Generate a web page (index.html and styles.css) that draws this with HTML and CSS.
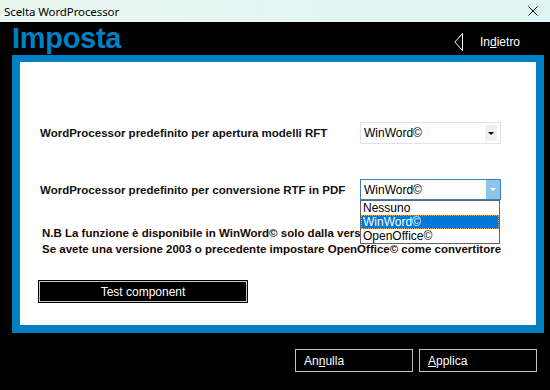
FILE: index.html
```html
<!DOCTYPE html>
<html>
<head>
<meta charset="utf-8">
<link rel="stylesheet" href="styles.css">
</head>
<body>
<div class="window">
  <div class="titlebar">
    <span class="title">Scelta WordProcessor</span>
    <svg class="close" width="10" height="10" viewBox="0 0 10 10"><path d="M0.5 0.5 L9.5 9.5 M9.5 0.5 L0.5 9.5" stroke="#000" stroke-width="1"/></svg>
  </div>
  <div class="client">
    <div class="header">
      <h1 class="heading">Imposta</h1>
      <div class="back">
        <svg class="back-icon" width="9" height="18" viewBox="0 0 9 18"><polygon points="8.5,0.5 8.5,17.5 0.8,9" fill="none" stroke="#fff" stroke-width="1"/></svg>
        <span class="back-text">In<u>d</u>ietro</span>
      </div>
    </div>
    <div class="panel">
      <div class="inner">
        <div class="row row1">
          <span class="label">WordProcessor predefinito per apertura modelli RFT</span>
          <div class="combo">
            <span class="combo-text">WinWord©</span>
            <span class="combo-btn"><span class="arrow"></span></span>
          </div>
        </div>
        <div class="row row2">
          <span class="label">WordProcessor predefinito per conversione RTF in PDF</span>
          <div class="combo combo-open">
            <span class="combo-text">WinWord©</span>
            <span class="combo-btn"><span class="arrow arrow-white"></span></span>
            <ul class="list">
              <li>Nessuno</li>
              <li class="sel">WinWord©</li>
              <li>OpenOffice©</li>
            </ul>
          </div>
        </div>
        <div class="note">
          <p class="note1">N.B La funzione è disponibile in WinWord© solo dalla versione 2007</p>
          <p class="note2">Se avete una versione 2003 o precedente impostare OpenOffice© come convertitore</p>
        </div>
        <div class="test-btn"><span>Test component</span></div>
      </div>
    </div>
    <div class="footer">
      <div class="btn"><span>An<u>n</u>ulla</span></div>
      <div class="btn"><span><u>A</u>pplica</span></div>
    </div>
  </div>
</div>
</body>
</html>
```
FILE: styles.css
```css
html, body {
  margin: 0;
  padding: 0;
}
body {
  width: 550px;
  height: 390px;
  overflow: hidden;
  font-family: "Liberation Sans", Arial, sans-serif;
}
.window {
  width: 550px;
  height: 390px;
  display: flex;
  flex-direction: column;
  background: #000;
}
.titlebar {
  height: 22px;
  flex: none;
  background: linear-gradient(90deg, #e9f6ef, #e0f5f5);
  display: flex;
  align-items: center;
  padding-left: 4px;
  padding-right: 12px;
}
.title {
  font-family: "Noto Sans", "Liberation Sans", sans-serif;
  font-size: 11.5px;
  color: #000;
  flex: 1;
  letter-spacing: -0.1px;
}
.close {
  display: block;
}
.client {
  flex: 1;
  display: flex;
  flex-direction: column;
}
.header {
  height: 33px;
  display: flex;
  align-items: flex-start;
  padding-left: 12px;
}
.heading {
  margin: 0;
  font-family: "Liberation Sans", Arial, sans-serif;
  font-weight: bold;
  font-size: 29px;
  line-height: 33px;
  color: #0080c2;
  flex: 1;
  letter-spacing: -0.3px;
}
.back {
  display: flex;
  align-items: center;
  margin-top: 11px;
  width: 96px;
}
.back-icon {
  display: block;
  margin-left: 0;
}
.back-text {
  color: #fff;
  font-size: 12px;
  margin-left: 17px;
}
.panel {
  margin-left: 12px;
  margin-right: 6px;
  height: 278px;
  box-sizing: border-box;
  background: #0080c2;
  padding: 7px 8px 8px 8px;
}
.inner {
  background: #fff;
  height: 100%;
  box-sizing: border-box;
  padding: 60px 0 0 20px;
  display: flex;
  flex-direction: column;
}
.row {
  display: flex;
  align-items: center;
}
.row2 {
  margin-top: 35px;
}
.label {
  width: 320px;
  font-weight: bold;
  font-size: 11.5px;
  color: #111;
}
.combo {
  position: relative;
  width: 141px;
  height: 22px;
  box-sizing: border-box;
  border: 1px solid #e3e3e3;
  display: flex;
  align-items: center;
  padding: 2px 2px 2px 3px;
}
.combo-open {
  height: 21px;
  border-color: #3a80c0;
  padding: 0 0 0 3px;
}
.combo-text {
  flex: 1;
  font-size: 12px;
  color: #000;
}
.combo-btn {
  width: 12px;
  height: 16px;
  background: #efefef;
  display: flex;
  align-items: center;
  justify-content: center;
  margin-right: 1px;
}
.combo-open .combo-btn {
  width: 14px;
  height: 19px;
  background: #8cc4ee;
  margin-right: 0;
}
.arrow {
  width: 0;
  height: 0;
  border-left: 3px solid transparent;
  border-right: 3px solid transparent;
  border-top: 3px solid #000;
}
.arrow-white {
  border-top-color: #fff;
}
.list {
  position: absolute;
  left: -1px;
  top: 20px;
  width: 140px;
  box-sizing: border-box;
  margin: 0;
  padding: 0;
  list-style: none;
  background: #fff;
  border: 1px solid #646464;
  z-index: 2;
}
.list li {
  height: 14px;
  line-height: 14px;
  font-size: 12px;
  padding-left: 2px;
  color: #000;
  box-sizing: border-box;
}
.list li.sel {
  background: #0078d7;
  color: #fff;
  outline: 1px dotted #f0a040;
  outline-offset: -1px;
}
.note {
  margin-top: 25px;
  padding-left: 2px;
}
.note p {
  margin: 0;
  font-weight: bold;
  font-size: 11.5px;
  line-height: 16px;
  color: #1a0800;
  white-space: nowrap;
}
.test-btn {
  margin-top: 23px;
  margin-left: -2px;
  width: 210px;
  height: 23px;
  box-sizing: border-box;
  background: #000;
  border: 1px solid #000;
  box-shadow: inset 0 0 0 1px #c8c8c8;
  display: flex;
  align-items: center;
  justify-content: center;
  color: #fff;
  font-size: 12px;
}
.footer {
  display: flex;
  justify-content: flex-end;
  gap: 6px;
  padding-top: 16px;
  padding-right: 13px;
}
.btn {
  width: 118px;
  height: 23px;
  box-sizing: border-box;
  border: 1px solid #bfbfbf;
  background: #000;
  color: #fff;
  font-size: 12px;
  display: flex;
  align-items: center;
  padding-left: 8px;
}
```
